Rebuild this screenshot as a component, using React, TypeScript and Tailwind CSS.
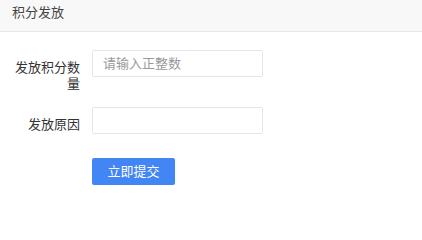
import React from 'react';

const font = { fontFamily: '"Liberation Sans", "Noto Sans CJK SC", sans-serif' };

const App: React.FC = () => {
  return (
    <div className="w-[422px] h-[233px] bg-white text-[13px]" style={font}>
      <div className="h-[32px] bg-[#f8f8f8] border-b border-[#e8e8e8] px-3 flex items-center">
        <span className="text-[#444] leading-none -mt-[7px]">积分发放</span>
      </div>
      <form className="pt-[18px]" onSubmit={(e) => e.preventDefault()}>
        <div className="flex">
          <label className="w-[68px] ml-3 text-right text-[#333] leading-[16px] pt-[10px]">
            发放积分数量
          </label>
          <input
            className="ml-3 w-[171px] h-[27px] border border-[#e6e6e6] rounded-[2px] px-[10px] text-[13px] text-[#333] placeholder:text-[#999] outline-none"
            placeholder="请输入正整数"
          />
        </div>
        <div className="flex mt-[15px]">
          <label className="w-[68px] ml-3 text-right text-[#333] leading-[16px] pt-[10px]">
            发放原因
          </label>
          <input className="ml-3 w-[171px] h-[27px] border border-[#e6e6e6] rounded-[2px] px-[10px] text-[13px] outline-none" />
        </div>
        <div className="pl-[92px] mt-[24px]">
          <button
            type="submit"
            className="w-[83px] h-[27px] bg-[#4285f4] text-white rounded-[2px] text-[13px]"
          >
            立即提交
          </button>
        </div>
      </form>
    </div>
  );
};

export default App;
